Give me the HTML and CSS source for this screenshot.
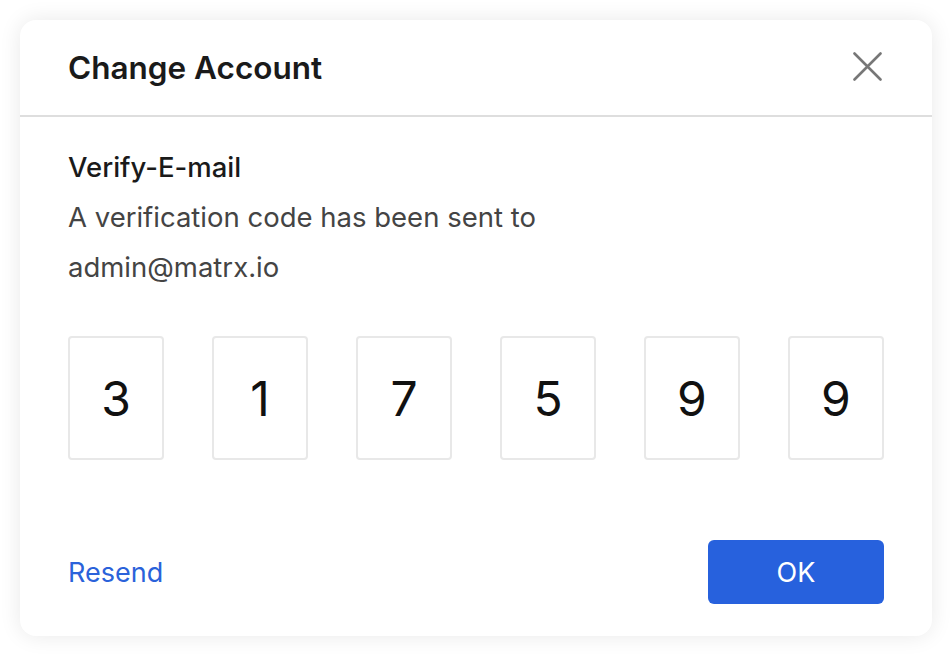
FILE: index.html
```html
<!DOCTYPE html>
<html lang="en">
<head>
<meta charset="utf-8">
<title>Change Account</title>
<link rel="stylesheet" href="styles.css">
</head>
<body>
<div class="dialog">
  <div class="header">
    <h1 class="title">Change Account</h1>
    <button class="close" aria-label="Close">
      <svg width="29" height="29" viewBox="0 0 29 29"><path d="M1.5 1.5 L27.5 27.5 M27.5 1.5 L1.5 27.5" stroke="#777" stroke-width="2.6" stroke-linecap="round" fill="none"/></svg>
    </button>
  </div>
  <div class="body">
    <div class="subtitle">Verify-E-mail</div>
    <div class="text">A verification code has been sent to</div>
    <div class="text">admin@matrx.io</div>
    <div class="codes">
      <div class="code">3</div>
      <div class="code">1</div>
      <div class="code">7</div>
      <div class="code">5</div>
      <div class="code">9</div>
      <div class="code">9</div>
    </div>
  </div>
  <div class="footer">
    <a class="resend" href="#">Resend</a>
    <button class="ok">OK</button>
  </div>
</div>
</body>
</html>
```
FILE: styles.css
```css
html, body { margin: 0; padding: 0; }
body {
  background: #ffffff;
  font-family: Inter, "Noto Sans", sans-serif;
  width: 952px;
  height: 656px;
  padding: 20px;
  box-sizing: border-box;
}
.dialog {
  width: 912px;
  height: 616px;
  background: #fff;
  border-radius: 16px;
  box-shadow: 0 0 22px rgba(0,0,0,0.09);
  display: flex;
  flex-direction: column;
  box-sizing: border-box;
}
.header {
  height: 97px;
  border-bottom: 2px solid #dedede;
  box-sizing: border-box;
  display: flex;
  align-items: center;
  justify-content: space-between;
  padding: 0 50px 0 48px;
}
.title {
  margin: 0;
  font-size: 31.5px;
  font-weight: 600;
  color: #1a1a1a;
}
.close {
  border: 0;
  background: none;
  padding: 0;
  width: 29px;
  height: 29px;
  margin-top: -2px;
}
.close svg { display: block; }
.body {
  padding: 25px 48px 0 48px;
}
.subtitle {
  font-size: 27.5px;
  font-weight: 500;
  color: #1a1a1a;
  line-height: 50px;
}
.text {
  font-size: 27.5px;
  color: #444;
  line-height: 50px;
}
.codes {
  display: flex;
  gap: 48px;
  margin-top: 44px;
}
.code {
  width: 96px;
  height: 124px;
  box-sizing: border-box;
  border: 2px solid #e8e8e8;
  border-radius: 4px;
  display: flex;
  align-items: center;
  justify-content: center;
  font-size: 48px;
  color: #111;
}
.footer {
  margin-top: auto;
  display: flex;
  align-items: center;
  justify-content: space-between;
  padding: 0 48px 32px 48px;
}
.resend {
  font-size: 27px;
  color: #2a62da;
  text-decoration: none;
}
.ok {
  width: 176px;
  height: 64px;
  border: 0;
  border-radius: 6px;
  background: #2761dd;
  color: #fff;
  font-family: inherit;
  font-size: 27px;
}
```
